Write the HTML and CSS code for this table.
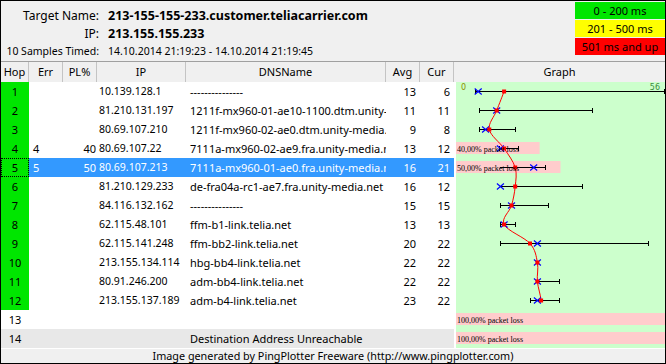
FILE: index.html
```html
<!DOCTYPE html>
<html>
<head>
<meta charset="utf-8">
<link rel="stylesheet" href="styles.css">
</head>
<body>
<div class="frame">
  <div class="top">
    <div class="info">
      <div class="lbl">Target Name:</div><div class="val">213-155-155-233.customer.teliacarrier.com</div>
      <div class="lbl">IP:</div><div class="val">213.155.155.233</div>
      <div class="lbl small">10 Samples Timed:</div><div class="val small">14.10.2014 21:19:23 - 14.10.2014 21:19:45</div>
    </div>
    <div class="legend">
      <div class="lg green">0 - 200 ms</div>
      <div class="lg yellow">201 - 500 ms</div>
      <div class="lg red">501 ms and up</div>
    </div>
  </div>
  <div class="table">
    <div class="hd">Hop</div><div class="hd">Err</div><div class="hd">PL%</div><div class="hd">IP</div><div class="hd">DNSName</div><div class="hd">Avg</div><div class="hd">Cur</div><div class="hd last">Graph</div>

    <div class="row"><div class="c hop">1</div><div class="c err"></div><div class="c pl"></div><div class="c ip">10.139.128.1</div><div class="c dns">---------------</div><div class="c num">13</div><div class="c num">6</div></div>
    <div class="row"><div class="c hop">2</div><div class="c err"></div><div class="c pl"></div><div class="c ip">81.210.131.197</div><div class="c dns">1211f-mx960-01-ae10-1100.dtm.unity-media.net</div><div class="c num">11</div><div class="c num">11</div></div>
    <div class="row"><div class="c hop">3</div><div class="c err"></div><div class="c pl"></div><div class="c ip">80.69.107.210</div><div class="c dns">1211f-mx960-02-ae0.dtm.unity-media.net</div><div class="c num">9</div><div class="c num">8</div></div>
    <div class="row"><div class="c hop">4</div><div class="c err">4</div><div class="c pl">40</div><div class="c ip">80.69.107.22</div><div class="c dns">7111a-mx960-02-ae9.fra.unity-media.net</div><div class="c num">13</div><div class="c num">12</div></div>
    <div class="row sel"><div class="c hop focus">5</div><div class="c err">5</div><div class="c pl">50</div><div class="c ip">80.69.107.213</div><div class="c dns">7111a-mx960-01-ae0.fra.unity-media.net</div><div class="c num">16</div><div class="c num">21</div></div>
    <div class="row"><div class="c hop">6</div><div class="c err"></div><div class="c pl"></div><div class="c ip">81.210.129.233</div><div class="c dns">de-fra04a-rc1-ae7.fra.unity-media.net</div><div class="c num">16</div><div class="c num">12</div></div>
    <div class="row"><div class="c hop">7</div><div class="c err"></div><div class="c pl"></div><div class="c ip">84.116.132.162</div><div class="c dns">---------------</div><div class="c num">15</div><div class="c num">15</div></div>
    <div class="row"><div class="c hop">8</div><div class="c err"></div><div class="c pl"></div><div class="c ip">62.115.48.101</div><div class="c dns">ffm-b1-link.telia.net</div><div class="c num">13</div><div class="c num">13</div></div>
    <div class="row"><div class="c hop">9</div><div class="c err"></div><div class="c pl"></div><div class="c ip">62.115.141.248</div><div class="c dns">ffm-bb2-link.telia.net</div><div class="c num">20</div><div class="c num">22</div></div>
    <div class="row"><div class="c hop">10</div><div class="c err"></div><div class="c pl"></div><div class="c ip">213.155.134.114</div><div class="c dns">hbg-bb4-link.telia.net</div><div class="c num">22</div><div class="c num">22</div></div>
    <div class="row"><div class="c hop">11</div><div class="c err"></div><div class="c pl"></div><div class="c ip">80.91.246.200</div><div class="c dns">adm-bb4-link.telia.net</div><div class="c num">22</div><div class="c num">22</div></div>
    <div class="row"><div class="c hop">12</div><div class="c err"></div><div class="c pl"></div><div class="c ip">213.155.137.189</div><div class="c dns">adm-b4-link.telia.net</div><div class="c num">23</div><div class="c num">22</div></div>
    <div class="row"><div class="c hop none">13</div><div class="c err"></div><div class="c pl"></div><div class="c ip"></div><div class="c dns"></div><div class="c num"></div><div class="c num"></div></div>
    <div class="row dest"><div class="c hop none">14</div><div class="c err"></div><div class="c pl"></div><div class="c ip"></div><div class="c dns wide">Destination Address Unreachable</div><div class="c num"></div><div class="c num"></div></div>

    <div class="graph">
      <svg width="209" height="266" viewBox="0 0 209 266" xmlns="http://www.w3.org/2000/svg">
        <rect x="0" y="0" width="209" height="266" fill="#ccffcc"/>
        <g fill="#ffcccc">
          <rect x="0" y="60" width="83.6" height="12"/>
          <rect x="0" y="79" width="104.5" height="12"/>
          <rect x="0" y="231" width="209" height="12"/>
          <rect x="0" y="250" width="209" height="12"/>
        </g>
        <text x="5" y="7.5" class="scale" fill="#8c8c00">0</text>
        <text x="204" y="7.5" class="scale" fill="#3c8c3c" text-anchor="end">56</text>
        <g stroke="#000" stroke-width="1" fill="none" shape-rendering="crispEdges">
          <path d="M19 9.5H209M19.5 7v5M208.5 7v5"/>
          <path d="M23 28.5H137M23.5 26v5M136.5 26v5"/>
          <path d="M23 47.5H60M23.5 45v5M59.5 45v5"/>
          <path d="M43 66.5H63M43.5 64v5M62.5 64v5"/>
          <path d="M44 85.5H90M89.5 83v5"/>
          <path d="M44 104.5H127M126.5 102v5"/>
          <path d="M44 123.5H93M44.5 121v5M92.5 121v5"/>
          <path d="M44 142.5H60M44.5 140v5M59.5 140v5"/>
          <path d="M44 161.5H193M44.5 159v5M192.5 159v5"/>
          <path d="M81 199.5H104M103.5 197v5"/>
          <path d="M74 218.5H104M74.5 216v5M103.5 216v5"/>
        </g>
        <path fill="none" stroke="#ff0000" stroke-width="1" d="M48.1 9.5C46.87 12.67 43.17 22.17 40.7 28.5C38.23 34.83 32.07 41.17 33.3 47.5C34.53 53.83 43.78 60.17 48.1 66.5C52.42 72.83 57.35 79.17 59.2 85.5C61.05 91.83 59.82 98.17 59.2 104.5C58.58 110.83 57.35 117.17 55.5 123.5C53.65 129.83 45.02 136.17 48.1 142.5C51.18 148.83 68.45 155.17 74 161.5C79.55 167.83 80.17 174.17 81.4 180.5C82.63 186.83 80.78 193.17 81.4 199.5C82.02 205.83 84.48 212.33 85.1 218.5"/>
        <g stroke="#0000ff" stroke-width="1.2" fill="none">
          <path d="M18.7 6.5l7 6M25.7 6.5l-7 6"/>
          <path d="M37.2 25.5l7 6M44.2 25.5l-7 6"/>
          <path d="M26.1 44.5l7 6M33.1 44.5l-7 6"/>
          <path d="M40.9 63.5l7 6M47.9 63.5l-7 6"/>
          <path d="M74.2 82.5l7 6M81.2 82.5l-7 6"/>
          <path d="M40.9 101.5l7 6M47.9 101.5l-7 6"/>
          <path d="M52 120.5l7 6M59 120.5l-7 6"/>
          <path d="M44.6 139.5l7 6M51.6 139.5l-7 6"/>
          <path d="M77.9 158.5l7 6M84.9 158.5l-7 6"/>
          <path d="M77.9 177.5l7 6M84.9 177.5l-7 6"/>
          <path d="M77.9 196.5l7 6M84.9 196.5l-7 6"/>
          <path d="M77.9 215.5l7 6M84.9 215.5l-7 6"/>
        </g>
        <g fill="#ff0000">
          <rect x="46.1" y="7.5" width="4" height="4"/>
          <rect x="38.7" y="26.5" width="4" height="4"/>
          <rect x="31.3" y="45.5" width="4" height="4"/>
          <rect x="46.1" y="64.5" width="4" height="4"/>
          <rect x="57.2" y="83.5" width="4" height="4"/>
          <rect x="57.2" y="102.5" width="4" height="4"/>
          <rect x="53.5" y="121.5" width="4" height="4"/>
          <rect x="46.1" y="140.5" width="4" height="4"/>
          <rect x="72" y="159.5" width="4" height="4"/>
          <rect x="79.4" y="178.5" width="4" height="4"/>
          <rect x="79.4" y="197.5" width="4" height="4"/>
          <rect x="83.1" y="216.5" width="4" height="4"/>
        </g>
        <g class="loss" fill="#000">
          <text x="1" y="70">40,00% packet loss</text>
          <text x="1" y="89">50,00% packet loss</text>
          <text x="1" y="241">100,00% packet loss</text>
          <text x="1" y="260">100,00% packet loss</text>
        </g>
      </svg>
    </div>
  </div>
  <div class="footer">Image generated by PingPlotter Freeware (http://www.pingplotter.com)</div>
</div>
</body>
</html>
```

FILE: styles.css
```css
* {
  box-sizing: border-box;
  margin: 0;
  padding: 0;
}

body {
  margin: 0;
  background: #ffffff;
  font-family: "Noto Sans", "Open Sans", sans-serif;
  color: #000;
}

.frame {
  width: 666px;
  height: 364px;
  border: 1px solid #000;
  background: #f0f0f0;
  display: flex;
  flex-direction: column;
  overflow: hidden;
}

.top {
  height: 61px;
  flex: none;
  border-bottom: 1px solid #a0a0a0;
  display: flex;
  justify-content: space-between;
}

.info {
  display: grid;
  grid-template-columns: 98px auto;
  grid-auto-rows: 18px;
  column-gap: 9px;
  padding-top: 5px;
  align-items: center;
  white-space: nowrap;
}

.lbl {
  text-align: right;
  font-size: 12px;
}

.val {
  font-size: 12.5px;
  font-weight: bold;
}

.lbl.small,
.val.small {
  font-size: 10.5px;
  font-weight: normal;
}

.legend {
  width: 90px;
  display: flex;
  flex-direction: column;
  gap: 1px;
  padding-top: 1px;
}

.lg {
  height: 17px;
  line-height: 17px;
  text-align: center;
  font-size: 11px;
}

.green { background: #00e600; }
.yellow { background: #ffff00; }
.red { background: #ff0000; }

.table {
  flex: none;
  display: grid;
  grid-template-columns: 28px 34px 34px 89px 200px 34px 34px 211px;
  grid-template-rows: 20px repeat(14, 19px);
  background: #fff;
  font-size: 11px;
}

.hd {
  background: #f0f0f0;
  border-right: 1px solid #c4c4c4;
  text-align: center;
  line-height: 20px;
  font-size: 11px;
}

.hd.last {
  border-right: none;
}

.row {
  display: contents;
}

.c {
  line-height: 19px;
  white-space: nowrap;
  overflow: hidden;
  text-overflow: clip;
  background: #fff;
}

.hop {
  background: #00e600;
  text-align: center;
}

.hop.none {
  background: #fff;
}

.err {
  padding-left: 4px;
}

.pl {
  text-align: right;
  padding-right: 1px;
}

.ip {
  padding-left: 2px;
  font-size: 10.5px;
}

.dns {
  padding-left: 4px;
}

.num {
  text-align: right;
  padding-right: 4px;
}

.row.sel .c {
  background: #3399ff;
  color: #fff;
}

.row.sel .c.hop {
  background: #00e600;
  color: #000;
  border: 1px dotted #000;
  line-height: 17px;
}

.row.dest .c {
  background: #e8e8e8;
}

.dns.wide {
  overflow: visible;
}

.graph {
  grid-column: 8;
  grid-row: 2 / span 14;
  padding-left: 2px;
  background: #fff;
}

.graph svg {
  display: block;
}

.scale {
  font-family: "DejaVu Sans", sans-serif;
  font-size: 8px;
}

.loss text {
  font-family: "Liberation Serif", serif;
  font-size: 8px;
}

.footer {
  flex: none;
  height: 15px;
  border-top: 1px solid #fff;
  text-align: center;
  font-size: 10.8px;
  line-height: 13px;
}
```
